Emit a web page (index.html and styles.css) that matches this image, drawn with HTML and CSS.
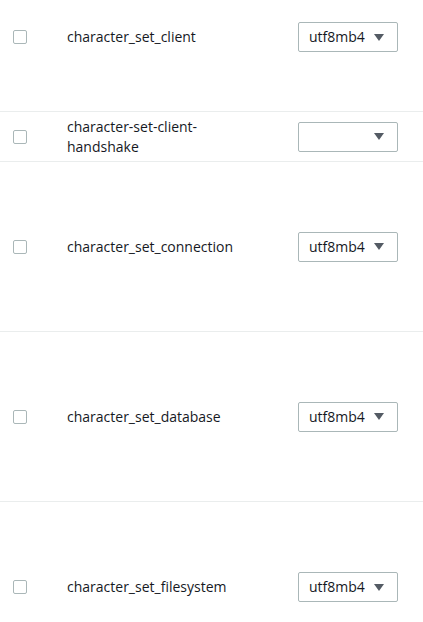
FILE: index.html
```html
<!DOCTYPE html>
<html>
<head>
<meta charset="utf-8">
<link rel="stylesheet" href="styles.css">
</head>
<body>
<div class="table">
  <div class="row row-top">
    <div class="cell-check"><span class="checkbox"></span></div>
    <div class="cell-name">character_set_client</div>
    <div class="cell-value"><div class="select"><span class="select-text">utf8mb4</span><span class="caret"></span></div></div>
  </div>
  <div class="row row-short">
    <div class="cell-check"><span class="checkbox"></span></div>
    <div class="cell-name">character-set-client-handshake</div>
    <div class="cell-value"><div class="select"><span class="select-text"></span><span class="caret"></span></div></div>
  </div>
  <div class="row row-tall">
    <div class="cell-check"><span class="checkbox"></span></div>
    <div class="cell-name">character_set_connection</div>
    <div class="cell-value"><div class="select"><span class="select-text">utf8mb4</span><span class="caret"></span></div></div>
  </div>
  <div class="row row-tall">
    <div class="cell-check"><span class="checkbox"></span></div>
    <div class="cell-name">character_set_database</div>
    <div class="cell-value"><div class="select"><span class="select-text">utf8mb4</span><span class="caret"></span></div></div>
  </div>
  <div class="row row-top row-last">
    <div class="cell-check"><span class="checkbox"></span></div>
    <div class="cell-name">character_set_filesystem</div>
    <div class="cell-value"><div class="select"><span class="select-text">utf8mb4</span><span class="caret"></span></div></div>
  </div>
</div>
</body>
</html>
```

FILE: styles.css
```css
html, body {
  margin: 0;
  padding: 0;
  background: #ffffff;
}

body {
  font-family: "Open Sans", "Noto Sans", sans-serif;
  font-size: 14px;
  line-height: 20px;
  color: #16191f;
  overflow: hidden;
}

.table {
  display: flex;
  flex-direction: column;
}

.row {
  display: grid;
  grid-template-columns: 67px 231px 100px;
  align-items: center;
  box-sizing: border-box;
  border-bottom: 1px solid #eaeded;
}

.row-top {
  height: 112px;
  align-items: start;
  padding-top: 22px;
}

.row-last {
  height: 120px;
  padding-top: 70px;
  border-bottom: none;
}

.row-short {
  height: 50px;
}

.row-tall {
  height: 170px;
}

.cell-check {
  padding-left: 13px;
  display: flex;
  align-items: center;
}

.row-top .cell-check {
  padding-top: 8px;
}

.row-top .cell-name {
  padding-top: 5px;
}

.checkbox {
  display: block;
  width: 14px;
  height: 14px;
  box-sizing: border-box;
  border: 1px solid #aab7b8;
  border-radius: 2px;
  background: #ffffff;
}

.cell-name {
  max-width: 150px;
}

.select {
  display: flex;
  align-items: center;
  justify-content: space-between;
  box-sizing: border-box;
  width: 100px;
  height: 30px;
  border: 1px solid #aab7b8;
  border-radius: 2px;
  padding: 0 13px 0 10px;
  background: #ffffff;
}

.select-text {
  color: #16191f;
}

.caret {
  width: 0;
  height: 0;
  border-left: 5px solid transparent;
  border-right: 5px solid transparent;
  border-top: 7px solid #545b64;
}
```
